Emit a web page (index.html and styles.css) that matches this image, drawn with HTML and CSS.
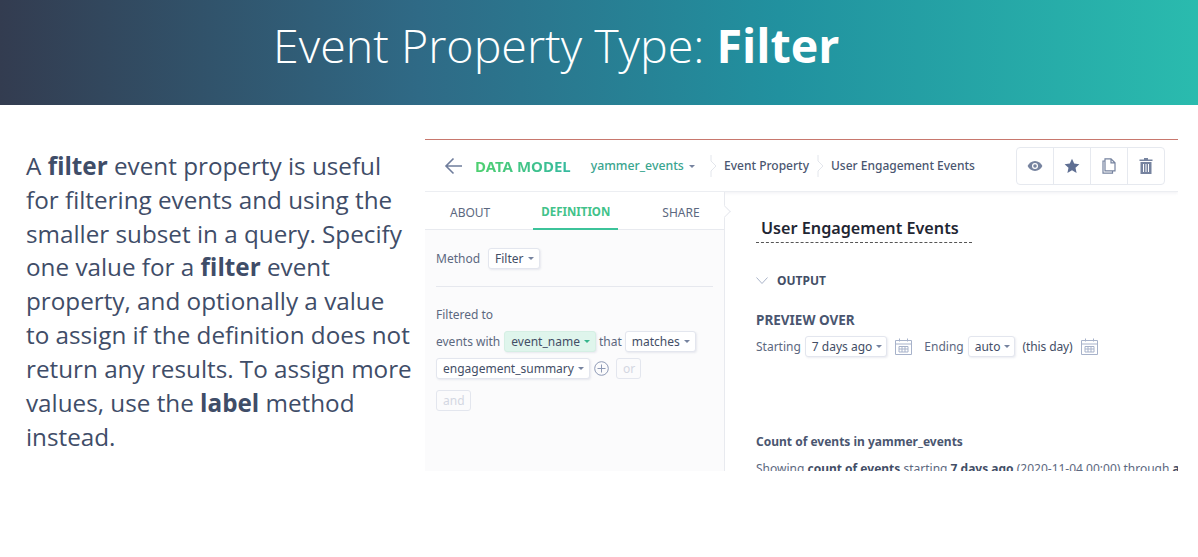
FILE: index.html
```html
<!DOCTYPE html>
<html lang="en">
<head>
    <meta charset="UTF-8">
    <meta name="viewport" content="width=device-width, initial-scale=1.0">
    <title>Event Property Type: Filter</title>
    <link rel="stylesheet" href="styles.css">
</head>
<body>
    <header class="banner">
        <h1>Event Property Type: <strong>Filter</strong></h1>
    </header>

    <main class="slide">
        <p class="intro">A <strong>filter</strong> event property is useful for filtering events and using the smaller subset in a query. Specify one value for a <strong>filter</strong> event property, and optionally a value to assign if the definition does not return any results. To assign more values, use the <strong>label</strong> method instead.</p>

        <div class="shot">
            <div class="topbar">
                <svg class="back" width="20" height="18" viewBox="0 0 20 18" fill="none" stroke="#6f7d9c" stroke-width="1.6"><path d="M18 9H2M9.5 1.5 2 9l7.500 7.500"/></svg>
                <span class="brand">DATA MODEL</span>
                <span class="crumb-db">yammer_events <i class="caret"></i></span>
                <svg class="sep" width="7" height="22" viewBox="0 0 7 22" fill="none" stroke="#e3e6ec"><path d="M1 0v6l5 5-5 5v6"/></svg>
                <span class="crumb">Event Property</span>
                <svg class="sep sep-tight" width="7" height="22" viewBox="0 0 7 22" fill="none" stroke="#e3e6ec"><path d="M1 0v6l5 5-5 5v6"/></svg>
                <span class="crumb">User Engagement Events</span>
                <div class="actions">
                    <span class="action">
                        <svg width="16" height="12" viewBox="0 0 16 12"><path fill="#76839f" d="M8 1C4.600 1 2 3.400.6 6 2 8.600 4.600 11 8 11s6-2.400 7.400-5C14 3.400 11.400 1 8 1Z"/><circle cx="8" cy="6" r="3" fill="#fff"/><circle cx="8" cy="6" r="1.800" fill="#76839f"/></svg>
                    </span>
                    <span class="action">
                        <svg width="16" height="16" viewBox="0 0 16 16"><path fill="#5f6f93" d="m8 .8 2.200 4.800 5.200.6-3.900 3.500 1.100 5.200L8 12.300l-4.600 2.600 1.100-5.200L.6 6.200l5.200-.6Z"/></svg>
                    </span>
                    <span class="action">
                        <svg width="14" height="16" viewBox="0 0 14 16" fill="none" stroke="#76839f" stroke-width="1.200"><path d="M3 .8h6l4 4v8H3ZM9 .8v4h4M3 3H1v12.200h9.500v-2"/></svg>
                    </span>
                    <span class="action">
                        <svg width="14" height="16" viewBox="0 0 14 16"><path fill="#76839f" d="M5 0h4v1.500h4.500V3H.5V1.500H5ZM1.500 4h11v12h-11Z"/><path stroke="#fff" d="M4.500 6v8M7 6v8M9.500 6v8"/></svg>
                    </span>
                </div>
            </div>

            <div class="panes">
                <aside class="side">
                    <nav class="tabs">
                        <span class="tab">ABOUT</span>
                        <span class="tab is-active">DEFINITION</span>
                        <span class="tab">SHARE</span>
                    </nav>
                    <div class="side-body">
                        <div class="row method">
                            <span>Method</span>
                            <span class="pick">Filter <i class="caret"></i></span>
                        </div>
                        <hr class="rule">
                        <div class="filtered-label">Filtered to</div>
                        <div class="row">
                            <span>events with</span>
                            <span class="pick pick-green">event_name <i class="caret"></i></span>
                            <span class="that">that</span>
                            <span class="pick">matches <i class="caret"></i></span>
                        </div>
                        <div class="row row-last">
                            <span class="pick">engagement_summary <i class="caret"></i></span>
                            <svg width="15" height="15" viewBox="0 0 15 15" fill="none" stroke="#8d99b5"><circle cx="7.500" cy="7.500" r="6.800"/><path d="M7.500 3.500v8M3.500 7.500h8"/></svg>
                            <span class="pick pick-off or">or</span>
                        </div>
                        <div class="row">
                            <span class="pick pick-off">and</span>
                        </div>
                    </div>
                </aside>

                <section class="content">
                    <h2 class="name">User Engagement Events</h2>
                    <div class="output">
                        <svg width="12" height="7" viewBox="0 0 12 7" fill="none" stroke="#a9b3c8"><path d="m.5.500 5.500 6 5.500-6"/></svg>
                        <span>OUTPUT</span>
                    </div>
                    <h3 class="preview">PREVIEW OVER</h3>
                    <div class="row range">
                        <span class="muted">Starting</span>
                        <span class="pick">7 days ago <i class="caret"></i></span>
                        <svg class="cal" width="17" height="17" viewBox="0 0 17 17" fill="none" stroke="#a7b2ca"><path d="M.5 2.500h16v14H.5ZM.5 6h16M4.500.500v3M12.500.500v3M4 8.500h9v5.500H4ZM7 8.500V14M10 8.500V14M4 11h9"/></svg>
                        <span class="muted ending">Ending</span>
                        <span class="pick">auto <i class="caret"></i></span>
                        <span class="this-day">(this day)</span>
                        <svg class="cal" width="17" height="17" viewBox="0 0 17 17" fill="none" stroke="#a7b2ca"><path d="M.5 2.500h16v14H.5ZM.5 6h16M4.500.500v3M12.500.500v3M4 8.500h9v5.500H4ZM7 8.500V14M10 8.500V14M4 11h9"/></svg>
                    </div>
                    <h4 class="count">Count of events in yammer_events</h4>
                    <p class="showing">Showing <b>count of events</b> starting <b>7 days ago</b> (2020-11-04 00:00) through <b>auto</b> (this day)</p>
                </section>
            </div>
        </div>
    </main>
</body>
</html>
```

FILE: styles.css
```css
body {
    margin: 0;
    background-color: #fff;
    font-family: "Open Sans", sans-serif;
    color: #3b4660;
}
.banner {
    height: 105px;
    padding-left: 273px;
    background: linear-gradient(90deg, #333c50 0%, #2f6a86 35%, #21919f 65%, #2abbae 100%);
    color: #fff;
    box-sizing: border-box;
}
.banner h1 {
    margin: 0;
    font-size: 46.6px;
    font-weight: 300;
    line-height: 91px;
}
.banner strong {
    font-weight: 700;
}
.slide {
    display: flex;
    align-items: flex-start;
    padding: 34px 20px 0 26px;
}
.intro {
    flex: none;
    width: 387px;
    margin: 9.7px 12px 0 0;
    font-size: 24.25px;
    line-height: 33.9px;
    color: #3f4d68;
}
.shot {
    flex: none;
    width: 753px;
    height: 332px;
    overflow: hidden;
    border-top: 1px solid #c8786e;
    box-sizing: border-box;
    font-family: "Noto Sans", sans-serif;
    font-size: 12px;
}
.topbar {
    display: flex;
    align-items: center;
    height: 51px;
    padding-left: 19px;
    border-bottom: 1px solid #eceef2;
    box-shadow: 0 1px 3px rgba(60, 70, 100, 0.08);
    position: relative;
}
.back {
    margin-right: 11px;
}
.brand {
    margin-right: 20px;
    font-size: 15px;
    font-weight: 700;
    background: linear-gradient(90deg, #4fd06f, #35b9a0);
    -webkit-background-clip: text;
    background-clip: text;
    color: transparent;
}
.crumb-db {
    color: #3aa58f;
    font-weight: 500;
    font-size: 12.3px;
}
.sep {
    margin: 0 7px 0 15px;
}
.sep-tight {
    margin: 0 7px 0 8px;
}
.crumb {
    color: #4a5670;
    font-weight: 500;
}
.actions {
    display: flex;
    margin-left: auto;
    margin-right: 13px;
    border: 1px solid #e6e9ef;
    border-radius: 4px;
}
.action {
    display: flex;
    align-items: center;
    justify-content: center;
    width: 36px;
    height: 36px;
    border-left: 1px solid #e6e9ef;
}
.action:first-child {
    border-left: none;
}
.panes {
    display: flex;
    height: 280px;
}
.side {
    flex: none;
    width: 299px;
    background-color: #fbfbfc;
    border-right: 1px solid #e8eaef;
    position: relative;
}
.side::after {
    content: "";
    position: absolute;
    top: 15px;
    right: -5px;
    width: 8px;
    height: 8px;
    background-color: #fff;
    border-top: 1px solid #e8eaef;
    border-right: 1px solid #e8eaef;
    transform: rotate(45deg);
}
.tabs {
    display: flex;
    height: 38px;
    background-color: #fff;
    border-bottom: 1px solid #e8eaef;
    box-sizing: border-box;
}
.tab {
    display: flex;
    align-items: center;
    height: 38px;
    margin-left: 25px;
    padding: 3px 0 0;
    box-sizing: border-box;
    color: #5c6880;
    font-size: 12px;
}
.tab.is-active {
    margin-left: 43px;
    padding: 3px 8px 0;
    color: #41c28a;
    font-size: 11.5px;
    font-weight: 700;
    border-bottom: 2px solid #3cc39a;
}
.tab:last-child {
    margin-left: 44px;
}
.side-body {
    padding: 18px 11px 0;
    color: #5c6880;
}
.row {
    display: flex;
    align-items: center;
    gap: 4px;
    margin-bottom: 6px;
}
.row-last {
    margin-bottom: 11px;
}
.method {
    gap: 8px;
}
.that {
    margin: 0 -1px 0 -1px;
}
.or {
    margin-left: 3px;
}
.rule {
    margin: 17px 0 20px;
    border: none;
    border-top: 1px solid #e6e8ee;
}
.filtered-label {
    margin-bottom: 8px;
    line-height: 16px;
}
.pick {
    display: inline-flex;
    align-items: center;
    gap: 4px;
    height: 21px;
    padding: 0 5px 0 6px;
    box-sizing: border-box;
    background-color: #fff;
    border: 1px solid #e3e6ee;
    border-radius: 3px;
    box-shadow: 1px 1px 2px rgba(90, 100, 140, 0.12);
    color: #434e66;
    white-space: nowrap;
}
.pick-green {
    background-color: #dff5ec;
    border-color: #d5efe4;
}
.pick-green .caret {
    border-top-color: #35b58c;
}
.pick-off {
    background: none;
    box-shadow: none;
    color: #d3d7e2;
}
.caret {
    display: inline-block;
    width: 0;
    height: 0;
    border-left: 3px solid transparent;
    border-right: 3px solid transparent;
    border-top: 3px solid #76839f;
}
.crumb-db .caret {
    margin: 0 0 2px 2px;
}
.content {
    flex: 1;
    padding: 25px 0 0 31px;
    white-space: nowrap;
    overflow: hidden;
    color: #5c6880;
}
.name {
    width: 216px;
    margin: 0;
    padding: 0 0 3px 5px;
    box-sizing: border-box;
    border-bottom: 1px dashed #555;
    color: #1f2633;
    font-size: 16.2px;
    font-weight: 600;
    line-height: 22px;
}
.output {
    display: flex;
    align-items: center;
    gap: 9px;
    margin-top: 29px;
    color: #434e66;
    font-weight: 700;
}
.preview {
    margin: 22px 0 6px;
    color: #4a5670;
    font-size: 13.5px;
    font-weight: 700;
    line-height: 19px;
}
.range {
    color: #434e66;
}
.range .pick {
    padding-right: 4px;
}
.muted {
    color: #5c6880;
}
.cal {
    margin-left: 4px;
}
.ending {
    margin-left: 8px;
}
.this-day {
    margin-left: 3px;
    letter-spacing: -0.1px;
}
.count {
    margin: 77px 0 0;
    color: #4a5670;
    font-size: 12px;
    font-weight: 700;
    line-height: 16px;
}
.showing {
    margin: 11px 0 0;
    line-height: 16px;
}
.showing b {
    color: #434e66;
}
```
